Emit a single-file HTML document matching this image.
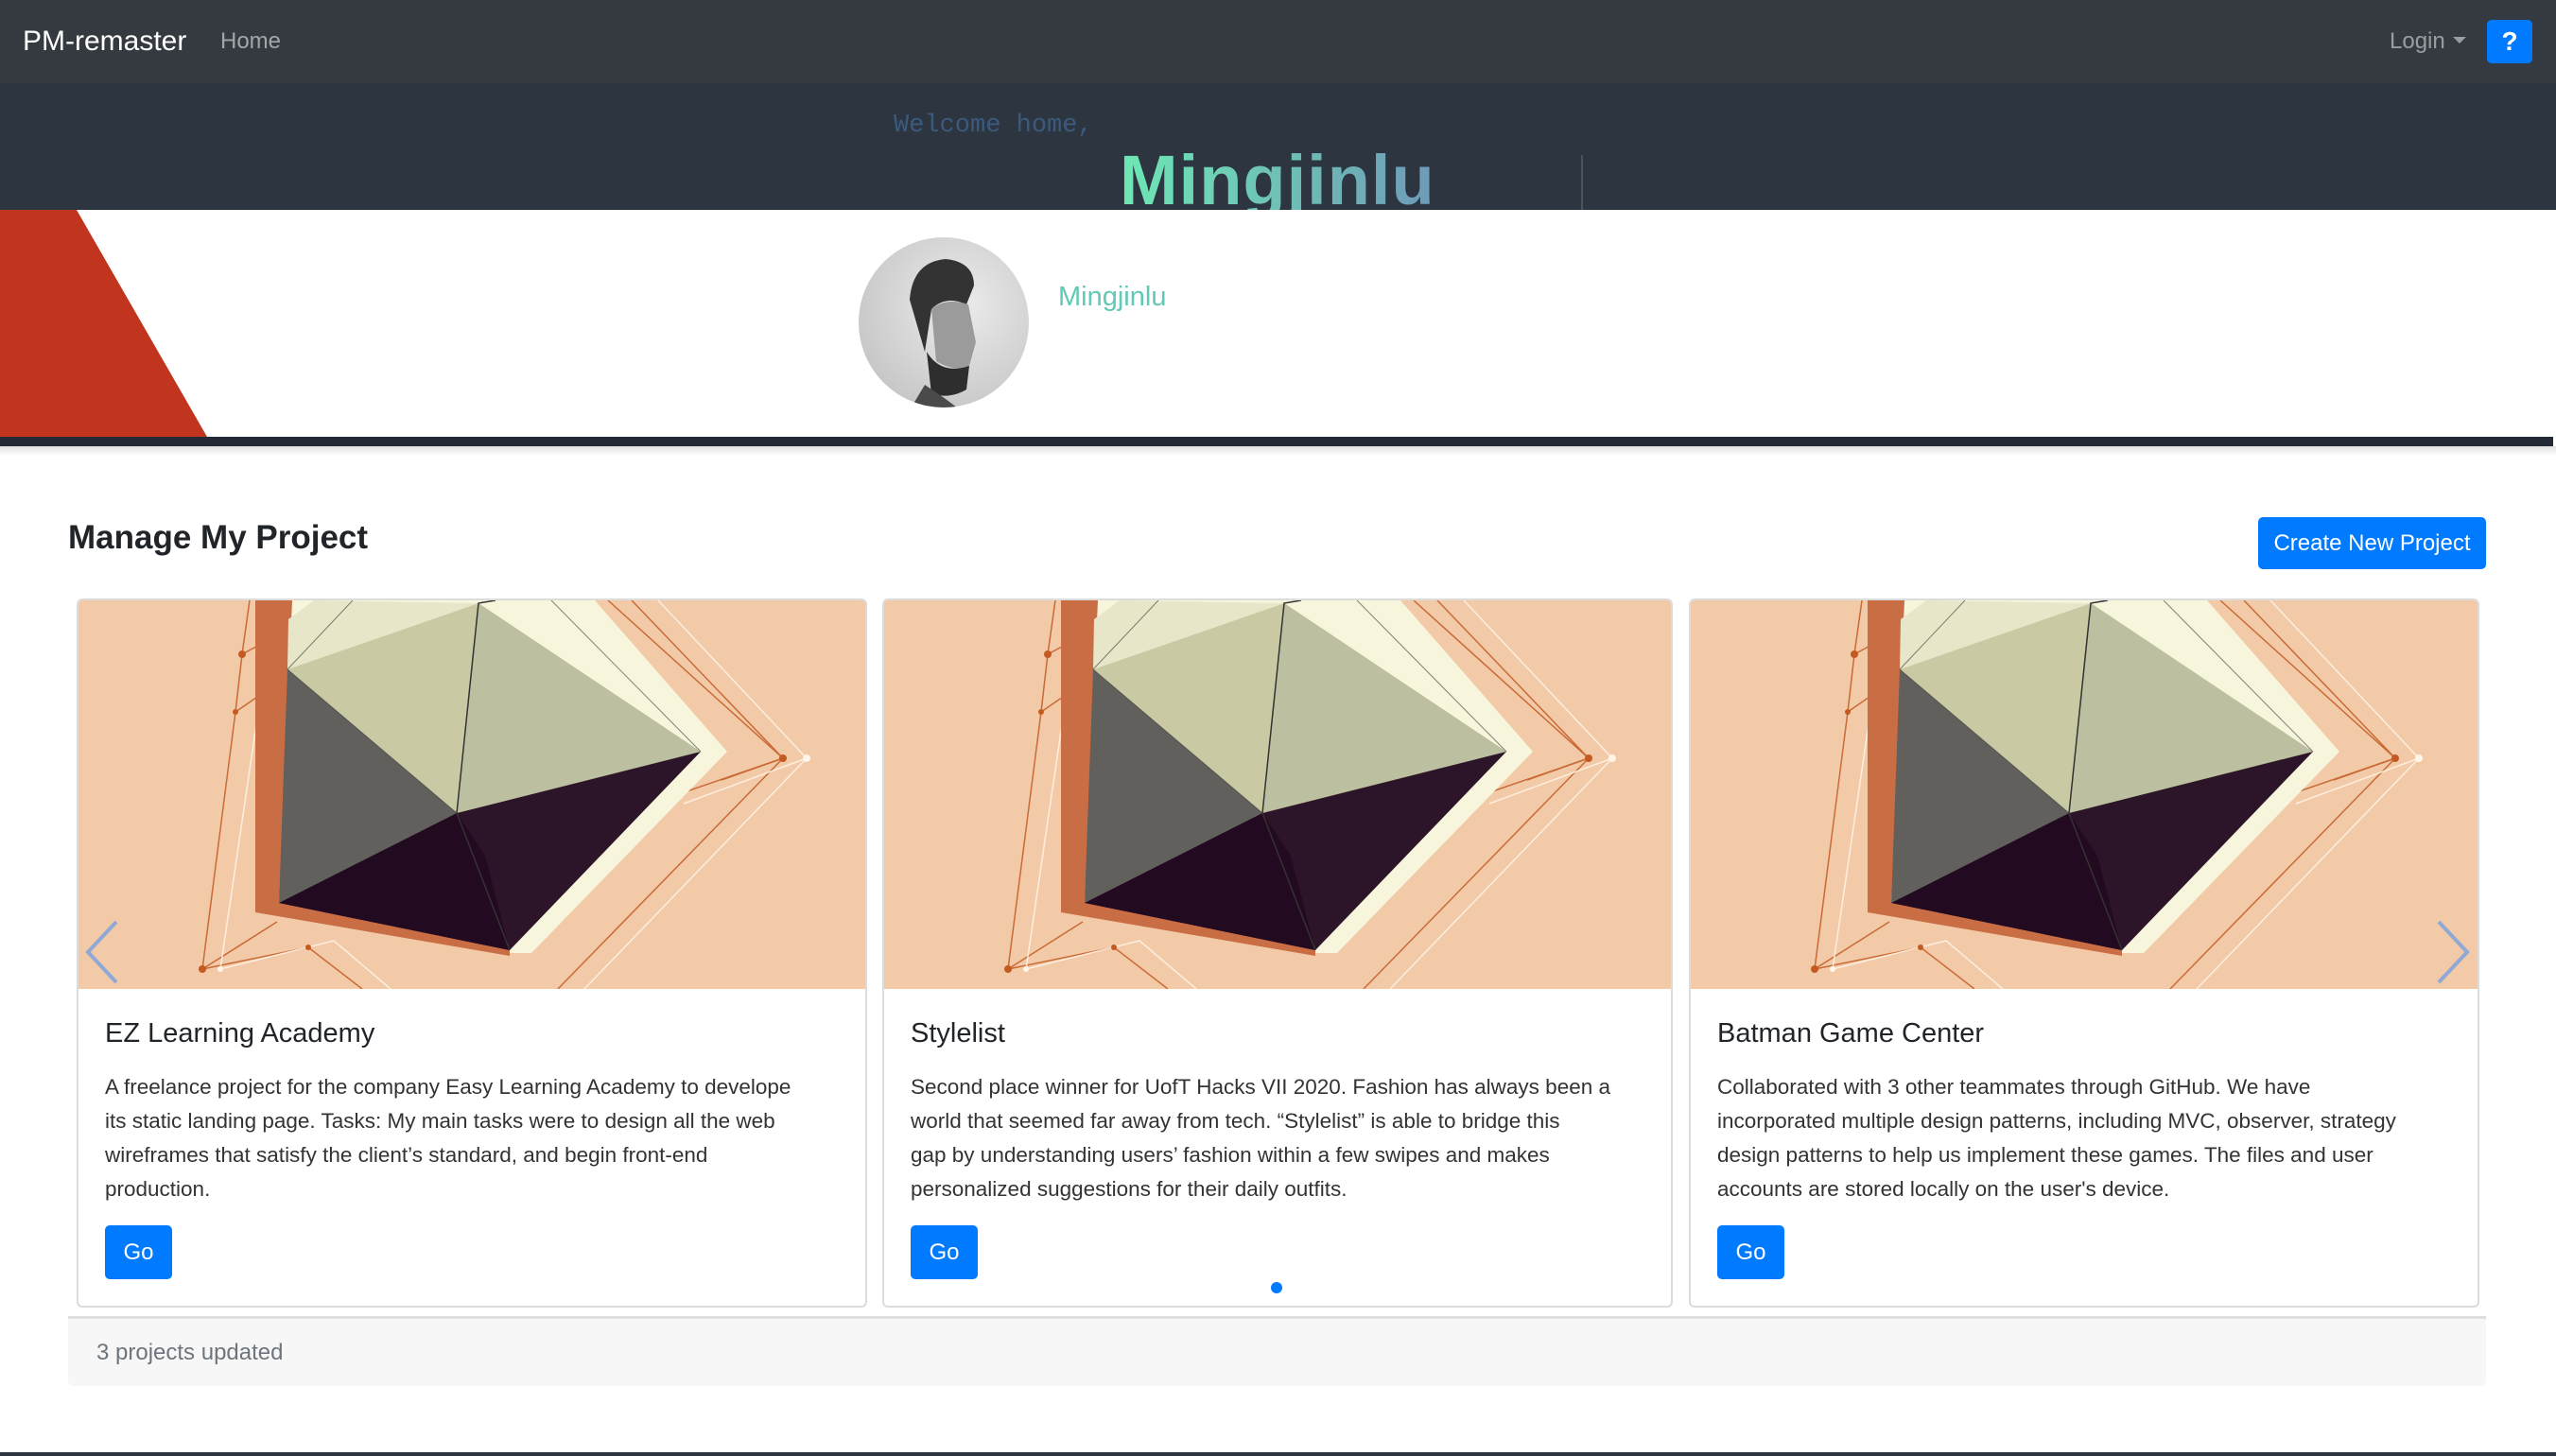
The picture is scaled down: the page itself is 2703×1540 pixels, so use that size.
<!DOCTYPE html>
<html><head><meta charset="utf-8"><style>
*{box-sizing:border-box;margin:0;padding:0}
body{width:2703px;height:1540px;overflow:hidden;background:#fff;font-family:"Liberation Sans",sans-serif;position:relative;color:#212529}
.nav{position:absolute;left:0;top:0;width:2703px;height:88px;background:#343a40}
.brand{position:absolute;left:24px;top:27px;font-size:30px;color:#fff}
.home{position:absolute;left:233px;top:30px;font-size:24px;color:rgba(255,255,255,.55)}
.login{position:absolute;left:2527px;top:30px;font-size:24px;color:rgba(255,255,255,.5)}
.login:after{content:"";display:inline-block;margin-left:8px;vertical-align:5px;border-top:7px solid rgba(255,255,255,.5);border-left:7px solid transparent;border-right:7px solid transparent}
.q{position:absolute;left:2630px;top:21px;width:48px;height:46px;background:#007bff;border-radius:5px;color:#fff;font-weight:bold;font-size:28px;text-align:center;line-height:46px}
.hero{position:absolute;left:0;top:88px;width:2703px;height:134px;background:#2c3540;overflow:hidden}
.wel{position:absolute;left:945px;top:30px;font-family:"Liberation Mono",monospace;font-size:27px;color:#3b5a7e}
.big{position:absolute;left:1184px;top:60px;font-size:74px;font-weight:bold;letter-spacing:1px;background:linear-gradient(90deg,#6de8b4,#6f9ab8);-webkit-background-clip:text;background-clip:text;color:transparent}
.vl{position:absolute;left:1672px;top:76px;width:2px;height:60px;background:#4a525c}
.panel{position:absolute;left:0;top:222px;width:2700px;height:240px;background:#fff;overflow:hidden}
.strip{position:absolute;left:0;top:462px;width:2700px;height:10px;background:#232a35}
.shadow{position:absolute;left:0;top:472px;width:2703px;height:10px;background:linear-gradient(#e0e0e0,#fff)}
.uname{position:absolute;left:1119px;top:298px;font-size:29px;color:#5fcab5}
h2{position:absolute;left:72px;top:549px;font-size:35px;font-weight:bold;color:#212529}
.btn{background:#007bff;color:#fff;border-radius:5px;text-align:center}
.create{position:absolute;left:2388px;top:547px;width:241px;height:55px;line-height:55px;font-size:24px}
.card{position:absolute;top:633px;width:836px;height:750px;border:2px solid #dcdcdc;border-radius:6px;overflow:hidden;background:#fff}
.card svg{display:block}
.ct{position:absolute;left:28px;top:442px;font-size:29px;color:#212529}
.cx{position:absolute;left:28px;top:497px;font-size:22.5px;line-height:36px;color:#333}
.go{position:absolute;left:28px;top:661px;width:71px;height:57px;line-height:57px;font-size:24px}
.foot{position:absolute;left:72px;top:1392px;width:2557px;height:74px;background:#f7f7f7;border-top:3px solid #dedede;border-radius:0 0 5px 5px}
.foot span{position:absolute;left:30px;top:22px;font-size:24px;color:#6c757d}
.dot{position:absolute;left:1344px;top:1356px;width:12px;height:12px;border-radius:50%;background:#007bff}
.bl{position:absolute;left:0;top:1536px;width:2703px;height:4px;background:#2c3540}
</style></head><body>
<div class="nav"><span class="brand">PM-remaster</span><span class="home">Home</span><span class="login">Login</span><div class="q">?</div></div>
<div class="hero"><div class="wel">Welcome home,</div><div class="big">Mingjinlu</div><div class="vl"></div></div>
<div class="panel">
<svg width="2700" height="240" style="position:absolute;left:0;top:0">
<polygon points="0,0 81,0 219,240 0,240" fill="#c1341e"/>
<defs><radialGradient id="ag" cx="0.6" cy="0.4" r="0.7"><stop offset="0" stop-color="#ececec"/><stop offset="1" stop-color="#c4c4c4"/></radialGradient>
<clipPath id="cc"><circle cx="998" cy="119" r="90"/></clipPath></defs>
<circle cx="998" cy="119" r="90" fill="url(#ag)"/>
<g clip-path="url(#cc)">
<path d="M962 95 Q965 55 1000 52 Q1030 55 1030 80 L1022 100 Q1000 90 985 105 L978 150 Z" fill="#333"/>
<path d="M985 105 Q1000 92 1024 100 L1032 140 L1025 165 Q1010 172 990 160 Z" fill="#9b9b9b"/>
<path d="M980 150 Q995 175 1025 165 L1022 190 Q1005 200 985 195 Z" fill="#2e2e2e"/>
<path d="M960 215 L978 185 L1000 200 L1020 215 Z" fill="#4a4a4a"/>
</g>
</svg>
</div>
<div class="uname">Mingjinlu</div>
<div class="strip"></div><div class="shadow"></div>
<h2>Manage My Project</h2>
<div class="btn create">Create New Project</div>

<svg width="0" height="0" style="position:absolute"><defs>
<g id="art">
<rect width="836" height="411" fill="#f2caa8"/>
<g fill="none" stroke="#c45a22" stroke-width="1.5" opacity=".85">
<polyline points="181,0 173,57 166,118 131,390"/>
<polyline points="173,57 260,10 300,0"/>
<polyline points="166,118 250,60"/>
<polyline points="585,0 745,167 507,411"/>
<polyline points="560,0 745,167 620,210"/>
<polyline points="131,390 243,367 300,411"/>
<polyline points="131,390 210,340"/>
<polyline points="745,167 680,190"/>
</g>
<g fill="none" stroke="#fff5e8" stroke-width="1.5" opacity=".85">
<polyline points="200,0 195,60 190,118 150,390"/>
<polyline points="613,0 770,167 535,411"/>
<polyline points="770,167 640,215"/>
<polyline points="150,390 270,360 330,411"/>
</g>
<circle cx="173" cy="57" r="4" fill="#c45a22"/><circle cx="166" cy="118" r="3" fill="#c45a22"/><circle cx="195" cy="60" r="4" fill="#fff5e8"/>
<circle cx="745" cy="167" r="4" fill="#c45a22"/><circle cx="770" cy="167" r="4" fill="#fff5e8"/>
<circle cx="131" cy="390" r="4" fill="#c45a22"/><circle cx="243" cy="367" r="3" fill="#c45a22"/><circle cx="150" cy="390" r="3" fill="#fff5e8"/>
<polygon points="249,0 546,0 686,160 479,373 456,373 212,320 221,0" fill="#f7f5dc"/>
<polygon points="187,0 226,0 212,320 456,365 456,376 187,330" fill="#c96d45"/>
<polygon points="423,3 221,73 400,225 658,160" fill="#c9c9a4"/>
<polygon points="423,3 400,225 658,160" fill="#bdc0a0"/>
<polygon points="249,0 423,3 221,73 222,20" fill="#e8e6c8"/>
<polygon points="221,73 212,320 400,225" fill="#62605c"/>
<polygon points="212,320 400,225 658,160 456,370" fill="#2c1528"/>
<polygon points="212,320 400,225 430,270 456,370" fill="#220a20"/>
<polyline points="441,0 423,3 400,225 456,370" stroke="#333" stroke-width="1.5" fill="none"/>
<polyline points="290,0 221,73 400,225" stroke="#333" stroke-width="1" fill="none" opacity=".6"/>
<polyline points="500,0 658,160" stroke="#333" stroke-width="1" fill="none" opacity=".6"/>
</g></defs></svg>

<div class="card" style="left:81px"><svg width="836" height="411" viewBox="0 0 836 411"><use href="#art"/></svg>
<div class="ct">EZ Learning Academy</div>
<div class="cx">A freelance project for the company Easy Learning Academy to develope<br>its static landing page. Tasks: My main tasks were to design all the web<br>wireframes that satisfy the client’s standard, and begin front-end<br>production.</div>
<div class="btn go">Go</div></div>
<div class="card" style="left:933px"><svg width="836" height="411" viewBox="0 0 836 411"><use href="#art"/></svg>
<div class="ct">Stylelist</div>
<div class="cx">Second place winner for UofT Hacks VII 2020. Fashion has always been a<br>world that seemed far away from tech. “Stylelist” is able to bridge this<br>gap by understanding users’ fashion within a few swipes and makes<br>personalized suggestions for their daily outfits.</div>
<div class="btn go">Go</div></div>
<div class="card" style="left:1786px"><svg width="836" height="411" viewBox="0 0 836 411"><use href="#art"/></svg>
<div class="ct">Batman Game Center</div>
<div class="cx">Collaborated with 3 other teammates through GitHub. We have<br>incorporated multiple design patterns, including MVC, observer, strategy<br>design patterns to help us implement these games. The files and user<br>accounts are stored locally on the user's device.</div>
<div class="btn go">Go</div></div>

<svg width="2703" height="1540" style="position:absolute;left:0;top:0;pointer-events:none">
<polyline points="123,975 93,1007 123,1039" fill="none" stroke="#8fa8d6" stroke-width="4"/>
<polyline points="2579,975 2609,1007 2579,1039" fill="none" stroke="#8fa8d6" stroke-width="4"/>
</svg>
<div class="dot"></div>
<div class="foot"><span>3 projects updated</span></div>
<div class="bl"></div>
</body></html>
